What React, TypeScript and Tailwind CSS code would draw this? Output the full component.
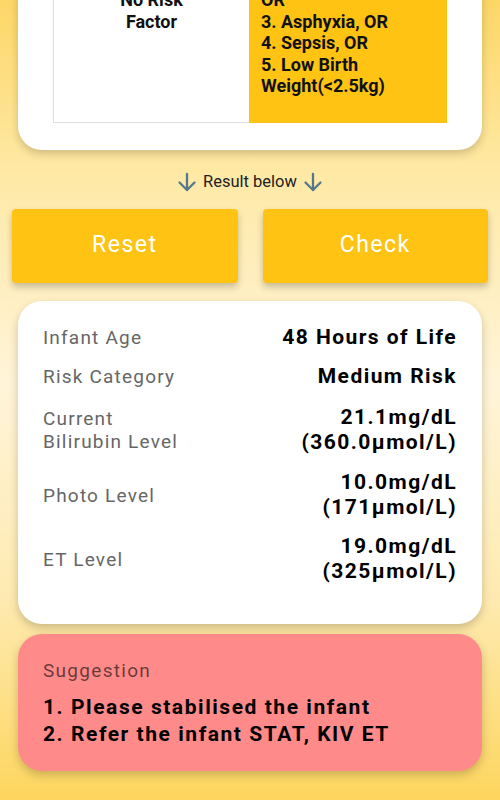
import React from "react";

function DownArrow() {
  return (
    <svg width="20" height="20" viewBox="0 0 20 20" fill="none" className="shrink-0">
      <path d="M10 2 V18" stroke="#56788a" strokeWidth="2.3" strokeLinecap="round" />
      <path d="M2.5 10.5 L10 18 L17.5 10.5" stroke="#56788a" strokeWidth="2.3" strokeLinecap="round" strokeLinejoin="round" />
    </svg>
  );
}

function Row({ label, value, className = "" }: { label: React.ReactNode; value: React.ReactNode; className?: string }) {
  return (
    <div className={"flex items-center justify-between " + className}>
      <div className="text-[19px] leading-[23px] tracking-[1.2px] text-[#666666]">{label}</div>
      <div className="text-right text-[21px] leading-[25.5px] font-bold tracking-[1.45px] text-black">{value}</div>
    </div>
  );
}

export default function App() {
  return (
    <div
      className="h-[800px] w-[500px] overflow-hidden bg-[linear-gradient(to_bottom,#fdd666_0%,#fee9a6_22%,#fff4d8_48%,#feeab0_75%,#fdd55e_100%)]"
      style={{ fontFamily: "Roboto, 'Noto Sans', sans-serif" }}
    >
      {/* top card (scrolled partly out of view) */}
      <div className="mx-[18px] mt-[-31px] rounded-[24px] bg-white px-[35px] pt-5 pb-[27px] shadow-[0_4px_8px_rgba(0,0,0,0.18)]">
        <div className="flex">
          <div className="w-[196px] border-l border-b border-[#dddddd] text-center text-[18px] font-bold leading-[21.5px] text-[#111]">
            <div>No Risk</div>
            <div>Factor</div>
          </div>
          <div className="flex-1 bg-[#ffc314] pl-3 pb-[26px] text-[18px] font-bold leading-[21.5px] text-[#111]">
            <div>OR</div>
            <div>3. Asphyxia, OR</div>
            <div>4. Sepsis, OR</div>
            <div>5. Low Birth</div>
            <div>Weight(&lt;2.5kg)</div>
          </div>
        </div>
      </div>

      {/* result below */}
      <div className="mt-[22px] flex items-center justify-center gap-[6px] text-[16.5px] leading-[20px] text-[#222]">
        <DownArrow />
        <span>Result below</span>
        <DownArrow />
      </div>

      {/* buttons */}
      <div className="mx-3 mt-[17px] flex gap-[25px]">
        <button className="h-[74px] flex-1 rounded-[4px] bg-[#ffc314] text-[23px] tracking-[1.5px] text-white shadow-[0_4px_7px_rgba(0,0,0,0.22)]">
          Reset
        </button>
        <button className="h-[74px] flex-1 rounded-[4px] bg-[#ffc314] text-[23px] tracking-[1.5px] text-white shadow-[0_4px_7px_rgba(0,0,0,0.22)]">
          Check
        </button>
      </div>

      {/* result card */}
      <div className="mx-[18px] mt-[18px] rounded-[24px] bg-white px-[25px] pt-[24px] pb-[39px] shadow-[0_4px_10px_rgba(0,0,0,0.2)]">
        <Row label="Infant Age" value="48 Hours of Life" />
        <Row className="mt-[14px]" label="Risk Category" value="Medium Risk" />
        <Row
          className="mt-[15px]"
          label={
            <>
              Current
              <br />
              Bilirubin Level
            </>
          }
          value={
            <>
              21.1mg/dL
              <br />
              (360.0μmol/L)
            </>
          }
        />
        <Row
          className="mt-[14px]"
          label="Photo Level"
          value={
            <>
              10.0mg/dL
              <br />
              (171μmol/L)
            </>
          }
        />
        <Row
          className="mt-[13px]"
          label="ET Level"
          value={
            <>
              19.0mg/dL
              <br />
              (325μmol/L)
            </>
          }
        />
      </div>

      {/* suggestion */}
      <div className="mx-[18px] mt-[10px] rounded-[24px] bg-[#ff8a8a] px-[25px] pt-[25px] pb-[23px] shadow-[0_4px_10px_rgba(0,0,0,0.2)]">
        <div className="text-[19px] leading-[23px] tracking-[1.3px] text-[rgba(0,0,0,0.6)]">Suggestion</div>
        <div className="mt-[12px] text-[21px] font-bold leading-[27px] tracking-[1.55px] text-black">
          <div>1. Please stabilised the infant</div>
          <div>2. Refer the infant STAT, KIV ET</div>
        </div>
      </div>
    </div>
  );
}
